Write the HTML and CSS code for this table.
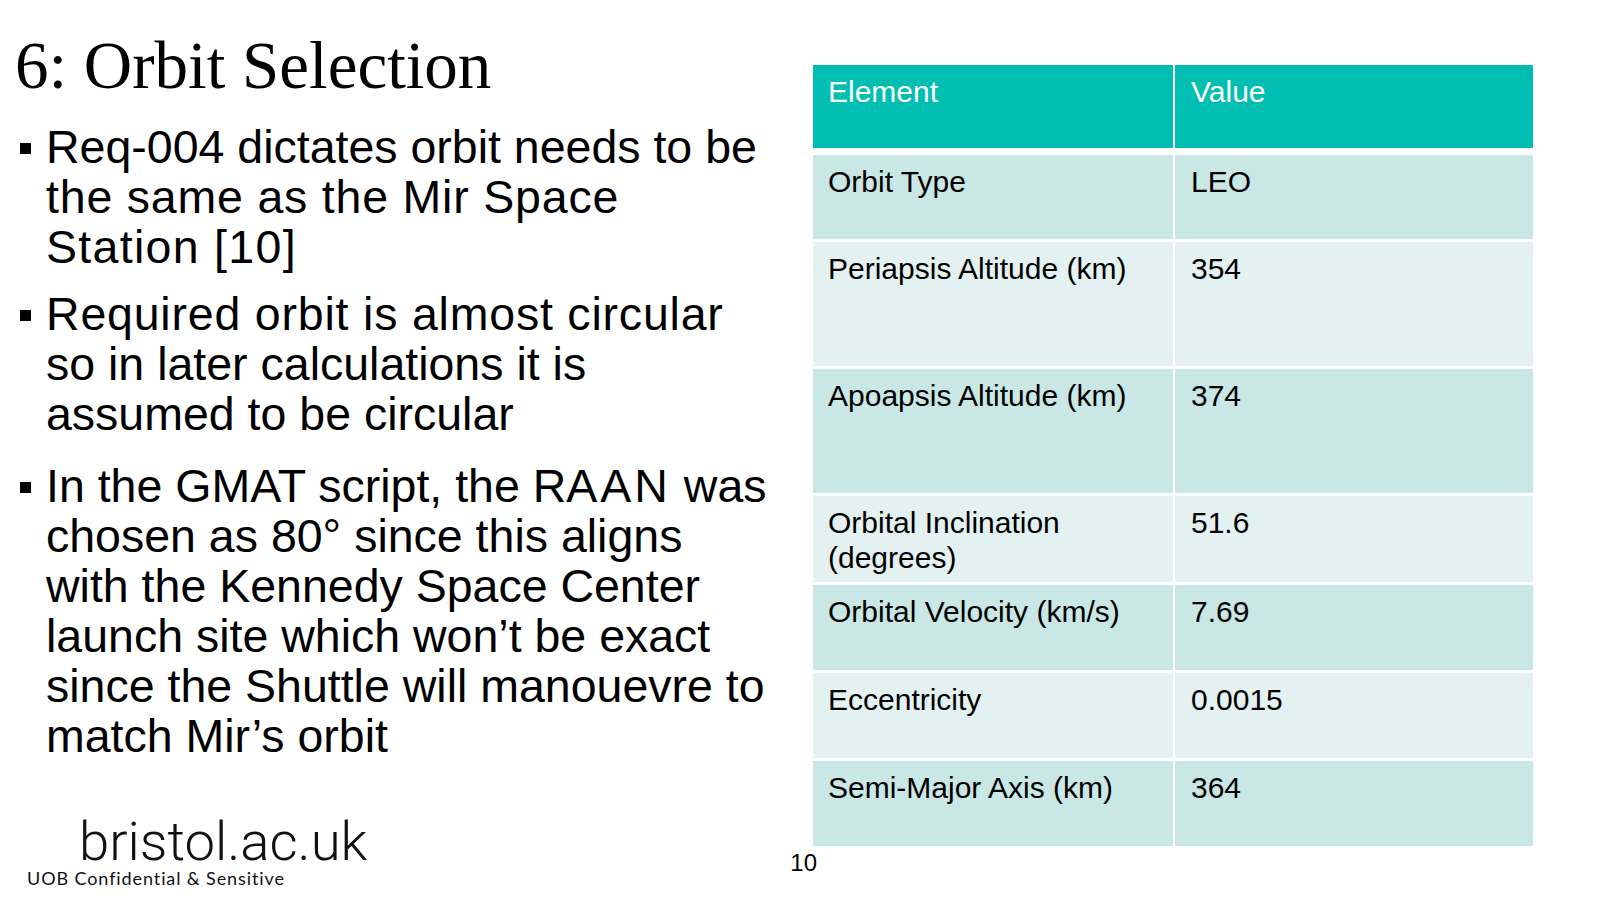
FILE: index.html
```html
<!DOCTYPE html>
<html lang="en">
<head>
<meta charset="utf-8">
<title>6: Orbit Selection</title>
<link rel="stylesheet" href="styles.css">
</head>
<body>
<div class="slide">
  <section class="left">
    <h1 class="title">6: Orbit Selection</h1>
    <ul class="points">
      <li class="point">Req-004 dictates orbit needs to be<br><span class="sp1">the same as the Mir Space</span><br><span class="sp2">Station [10]</span></li>
      <li class="point point-2"><span class="sp1">Required orbit is almost circular</span><br>so in later calculations it is<br>assumed to be circular</li>
      <li class="point point-3">In the GMAT script, the R<span class="sp3">AAN</span> was<br>chosen as 80° since this aligns<br>with the Kennedy Space Center<br>launch site which won’t be exact<br>since the Shuttle will manouevre to<br>match Mir’s orbit</li>
    </ul>
    <footer class="footer">
      <div class="brand">
        <div class="site">bristol.ac.uk</div>
        <div class="conf">UOB Confidential &amp; Sensitive</div>
      </div>
      <div class="pagenum">10</div>
    </footer>
  </section>
  <section class="right">
    <table class="orbit">
      <colgroup><col class="c1"><col class="c2"></colgroup>
      <thead>
        <tr class="row-head"><th>Element</th><th class="val">Value</th></tr>
      </thead>
      <tbody>
        <tr class="row-first odd"><td>Orbit Type</td><td class="val">LEO</td></tr>
        <tr class="row-tall even"><td>Periapsis Altitude (km)</td><td class="val">354</td></tr>
        <tr class="row-tall odd"><td>Apoapsis Altitude (km)</td><td class="val">374</td></tr>
        <tr class="row-mid even"><td>Orbital Inclination<br>(degrees)</td><td class="val">51.6</td></tr>
        <tr class="row odd"><td>Orbital Velocity (km/s)</td><td class="val">7.69</td></tr>
        <tr class="row even"><td>Eccentricity</td><td class="val">0.0015</td></tr>
        <tr class="row odd"><td>Semi-Major Axis (km)</td><td class="val">364</td></tr>
      </tbody>
    </table>
  </section>
</div>
</body>
</html>
```

FILE: styles.css
```css
* { box-sizing: border-box; }

html, body {
  margin: 0;
  padding: 0;
  background: #ffffff;
}

.slide {
  width: 1600px;
  height: 900px;
  display: flex;
  background: #ffffff;
  color: #000000;
  overflow: hidden;
}

.left {
  width: 813px;
  flex: 0 0 813px;
  height: 900px;
  display: flex;
  flex-direction: column;
}

.title {
  margin: 0;
  padding: 32px 0 0 15px;
  font-family: "Liberation Serif", "Times New Roman", serif;
  font-weight: normal;
  font-size: 67px;
  line-height: 67px;
  color: #000;
}

.points {
  list-style: none;
  margin: 23px 0 0 0;
  padding: 0;
  font-family: "Liberation Sans", Arial, sans-serif;
  font-size: 46.5px;
  line-height: 50px;
}

.point {
  position: relative;
  padding-left: 46px;
  white-space: nowrap;
}

.point::before {
  content: "";
  position: absolute;
  left: 20px;
  top: 21px;
  width: 11px;
  height: 11px;
  background: #000;
}

.point-2 { margin-top: 17px; }
.point-3 { margin-top: 22px; }

.sp1 { letter-spacing: 0.8px; }
.sp2 { letter-spacing: 1.3px; }
.sp3 { letter-spacing: 3px; }

.footer {
  margin-top: auto;
  padding-bottom: 13px;
  display: flex;
  justify-content: space-between;
  align-items: flex-start;
}

.brand {
  padding-left: 27px;
}

.site {
  margin-left: 52px;
  margin-bottom: 3px;
  font-family: Roboto, "Liberation Sans", sans-serif;
  font-weight: 300;
  font-size: 54.5px;
  line-height: 50px;
  color: #111;
}

.conf {
  font-family: Lato, "Open Sans", sans-serif;
  font-size: 18px;
  line-height: 18px;
  letter-spacing: 0.9px;
  color: #111;
}

.pagenum {
  margin-top: 35px;
  margin-right: -4px;
  font-family: "Liberation Sans", Arial, sans-serif;
  font-size: 24px;
  line-height: 24px;
}

.right {
  flex: 1 1 auto;
  padding-top: 65px;
}

.orbit {
  width: 720px;
  table-layout: fixed;
  border-collapse: separate;
  border-spacing: 0;
  font-family: "Liberation Sans", Arial, sans-serif;
  font-size: 30px;
  line-height: 35px;
}

.orbit .c1 { width: 360px; }
.orbit .c2 { width: 360px; }

.orbit th,
.orbit td {
  text-align: left;
  vertical-align: top;
  font-weight: normal;
  padding: 9px 15px 0 15px;
  border-top: 3px solid #ffffff;
}

.orbit .val {
  border-left: 2px solid #ffffff;
  padding-left: 16px;
}

.orbit .row-head th {
  border-top: 0;
  background: #00beb2;
  color: #ffffff;
  padding-top: 9px;
}

.orbit .row-first td { border-top-width: 7px; }

.orbit .odd td { background: #c9e7e4; }
.orbit .even td { background: #e3f2f0; }

.row-head { height: 83px; }
.row-first { height: 91px; }
.row-tall { height: 127px; }
.row-mid { height: 89px; }
.row { height: 88px; }
```
